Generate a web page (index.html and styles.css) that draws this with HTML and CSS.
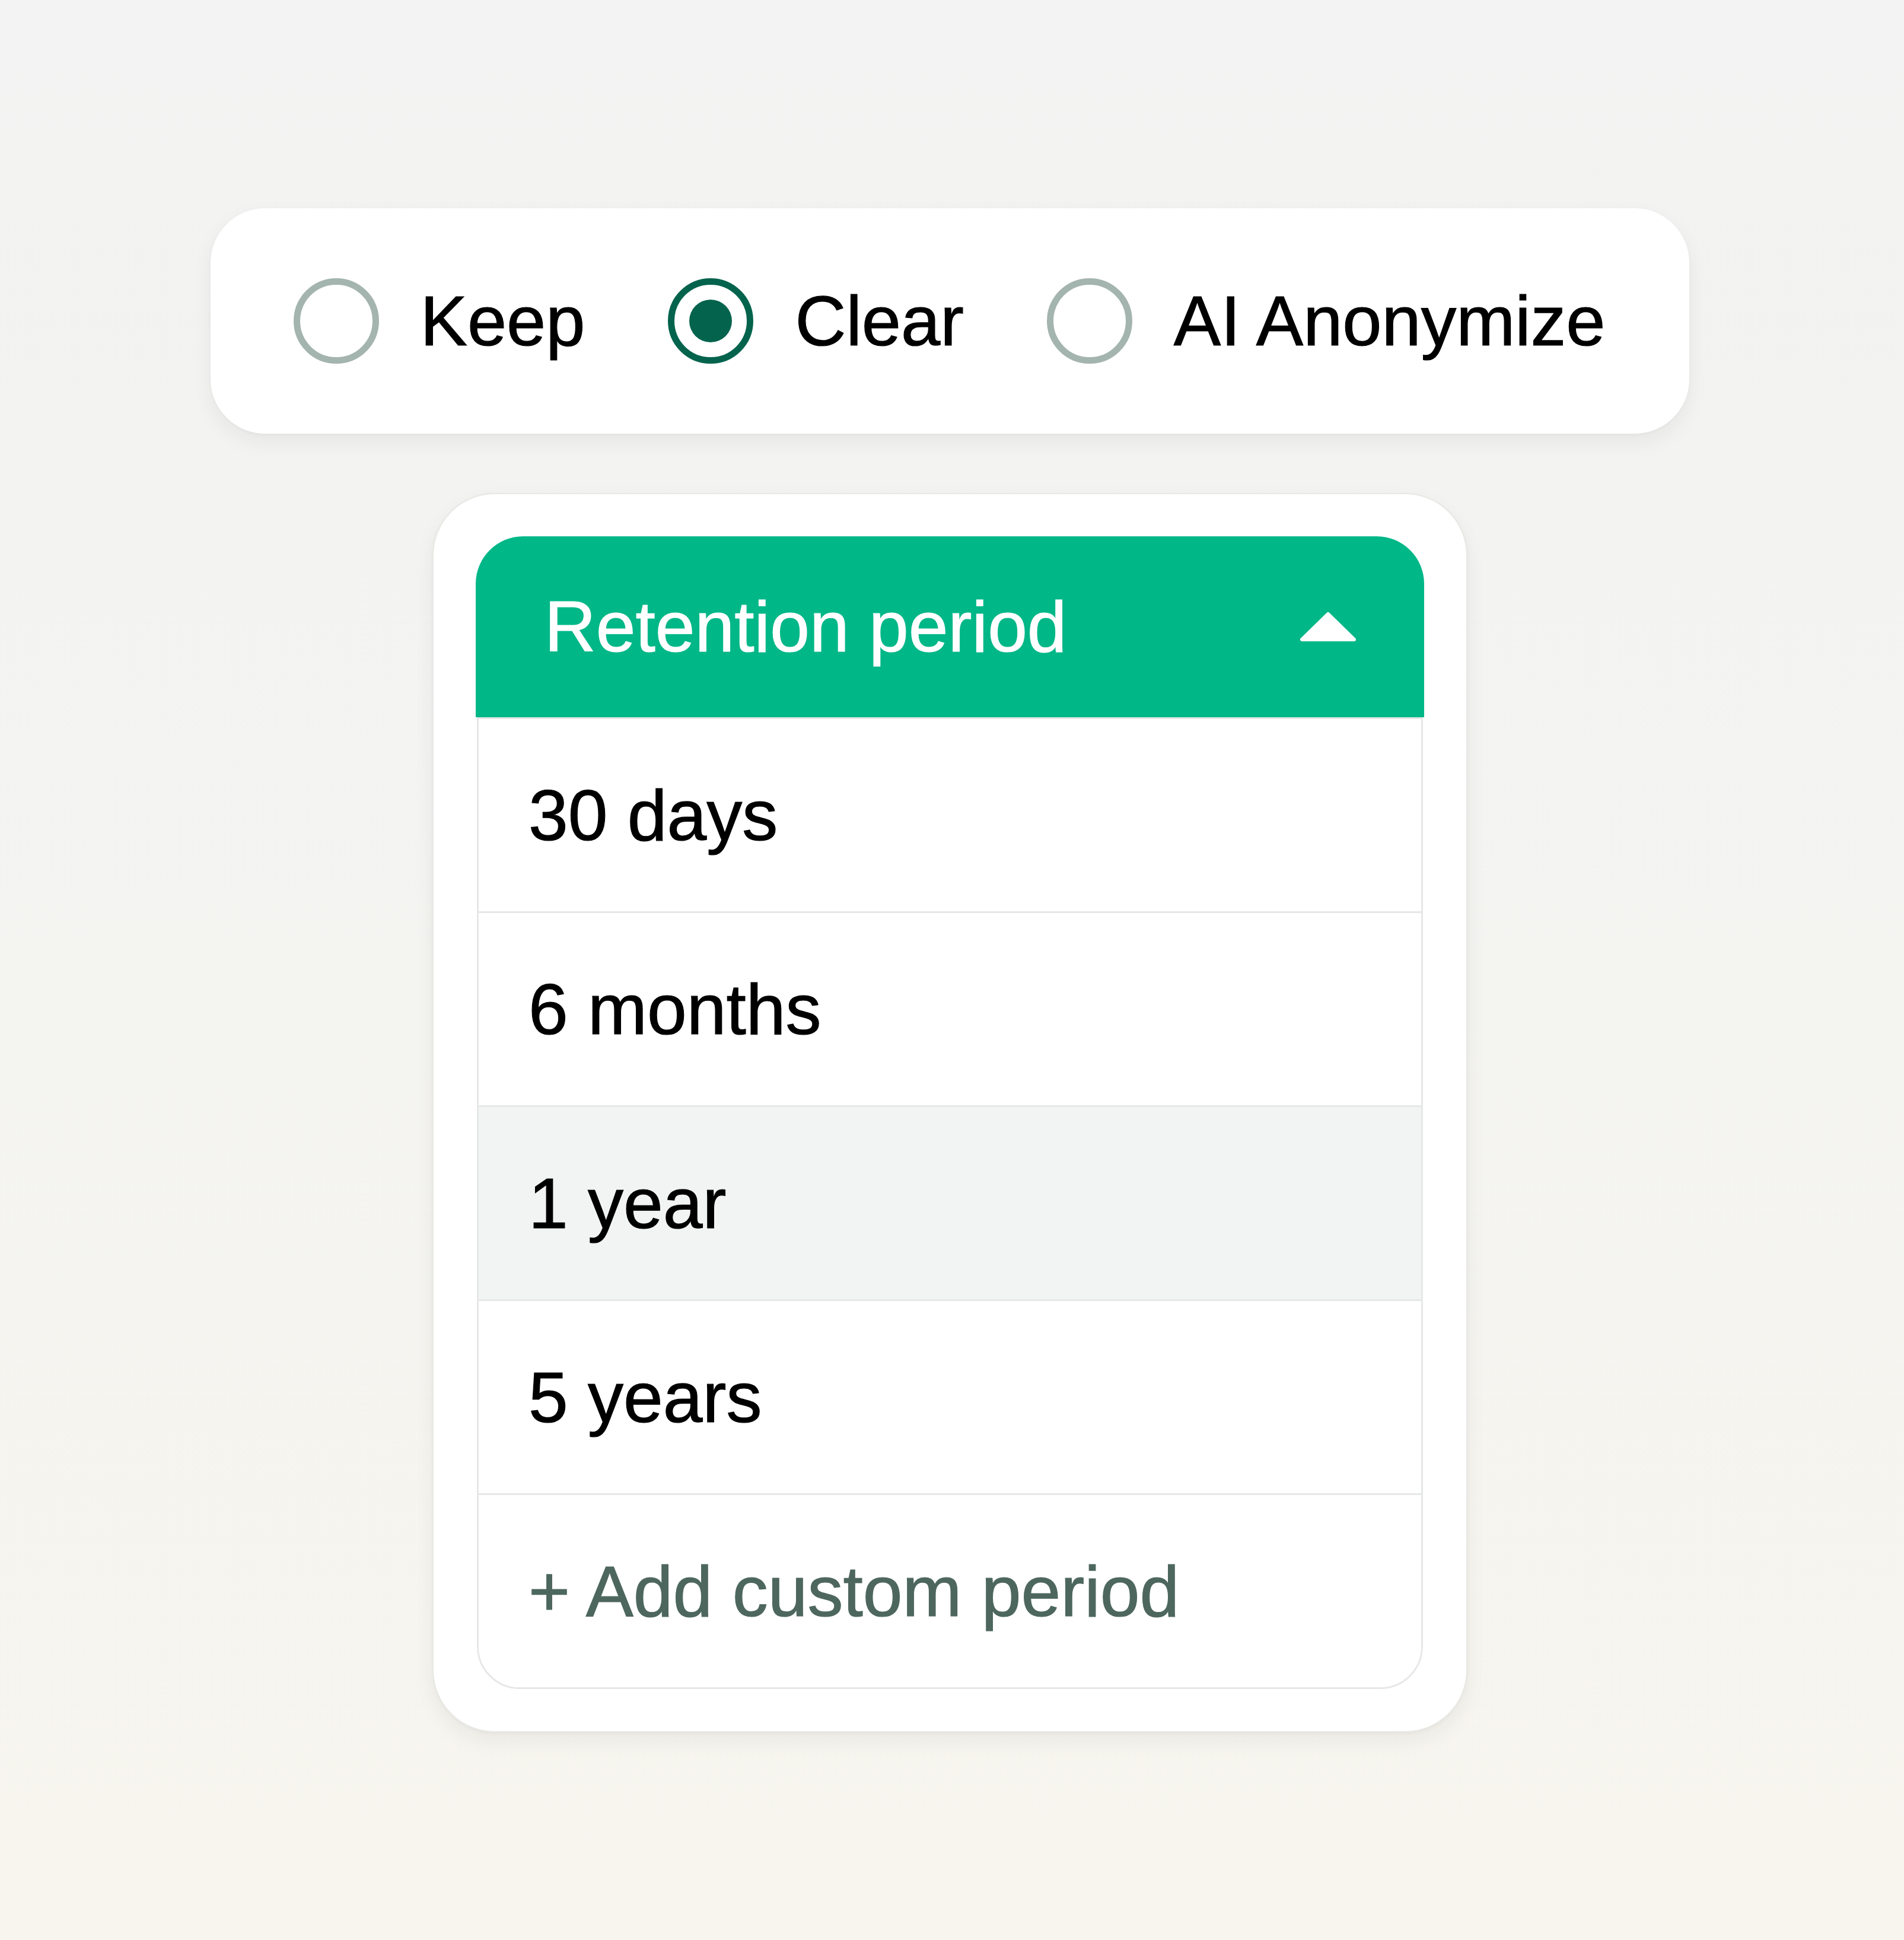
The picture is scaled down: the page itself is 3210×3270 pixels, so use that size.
FILE: index.html
```html
<!DOCTYPE html>
<html lang="en">
<head>
<meta charset="utf-8">
<title>Retention settings</title>
<link rel="stylesheet" href="styles.css">
</head>
<body>
  <div class="mode-card" role="radiogroup">
    <label class="option">
      <span class="radio"></span>
      <span class="option-label">Keep</span>
    </label>
    <label class="option">
      <span class="radio radio-checked"><span class="radio-dot"></span></span>
      <span class="option-label">Clear</span>
    </label>
    <label class="option">
      <span class="radio"></span>
      <span class="option-label">AI Anonymize</span>
    </label>
  </div>

  <div class="dropdown-card">
    <div class="dropdown-header">
      <span class="dropdown-title">Retention period</span>
      <svg class="caret" width="96" height="51" viewBox="0 0 96 51" aria-hidden="true">
        <polygon points="48,4 4,47 92,47" fill="#ffffff" stroke="#ffffff" stroke-width="6" stroke-linejoin="round"/>
      </svg>
    </div>
    <ul class="dropdown-list">
      <li class="dropdown-item">30 days</li>
      <li class="dropdown-item">6 months</li>
      <li class="dropdown-item is-active">1 year</li>
      <li class="dropdown-item">5 years</li>
      <li class="dropdown-item add-item">+ Add custom period</li>
    </ul>
  </div>
</body>
</html>
```

FILE: styles.css
```css
* {
  box-sizing: border-box;
}

html, body {
  margin: 0;
  padding: 0;
}

body {
  min-height: 3270px;
  background: linear-gradient(180deg, #f2f3f2 0%, #f4f4f1 50%, #f7f5ee 100%);
  font-family: "Liberation Sans", Arial, sans-serif;
  color: #000000;
  display: flex;
  flex-direction: column;
  align-items: center;
  justify-content: center;
  gap: 100px;
  padding-right: 7px;
}

/* ---------- top radio card ---------- */
.mode-card {
  display: flex;
  align-items: center;
  gap: 140px;
  height: 380px;
  padding: 0 142px 0 140px;
  background: #ffffff;
  border-radius: 92px;
  box-shadow: 0 14px 34px rgba(30, 40, 30, 0.06), 0 2px 6px rgba(30, 40, 30, 0.03);
}

.option {
  display: flex;
  align-items: center;
  gap: 70px;
}

.radio {
  width: 144px;
  height: 144px;
  border-radius: 50%;
  border: 11px solid #a4b4ae;
  display: flex;
  align-items: center;
  justify-content: center;
  flex-shrink: 0;
}

.radio-checked {
  border-color: #03634d;
}

.radio-dot {
  width: 72px;
  height: 72px;
  border-radius: 50%;
  background: #03634d;
}

.option-label {
  font-size: 119px;
  line-height: 1;
  color: #000000;
  -webkit-text-stroke: 1.2px currentColor;
}

/* ---------- dropdown card ---------- */
.dropdown-card {
  width: 1745px;
  padding: 71px;
  background: #ffffff;
  border: 2px solid #e8e8e5;
  border-radius: 105px;
  box-shadow: 0 14px 34px rgba(30, 40, 30, 0.06), 0 2px 6px rgba(30, 40, 30, 0.03);
}

.dropdown-header {
  height: 305px;
  background: #00b788;
  border-radius: 80px 80px 0 0;
  display: flex;
  align-items: center;
  justify-content: space-between;
  padding: 0 114px 0 116px;
}

.dropdown-title {
  font-size: 120px;
  line-height: 1;
  color: #ffffff;
  -webkit-text-stroke: 1.2px currentColor;
}

.caret {
  display: block;
  flex-shrink: 0;
}

.dropdown-list {
  list-style: none;
  margin: 0 2px;
  padding: 0;
  border: 3px solid #e6e8e7;
  border-radius: 0 0 72px 72px;
  overflow: hidden;
}

.dropdown-item {
  height: 327px;
  display: flex;
  align-items: center;
  padding-left: 84px;
  font-size: 120px;
  line-height: 1;
  color: #000000;
  -webkit-text-stroke: 1.2px currentColor;
  border-bottom: 3px solid #e6e8e7;
  background: #ffffff;
}

.dropdown-item:last-child {
  border-bottom: none;
  height: 324px;
}

.dropdown-item.is-active {
  background: #f2f4f3;
}

.add-item {
  color: #4d675e;
}
```
